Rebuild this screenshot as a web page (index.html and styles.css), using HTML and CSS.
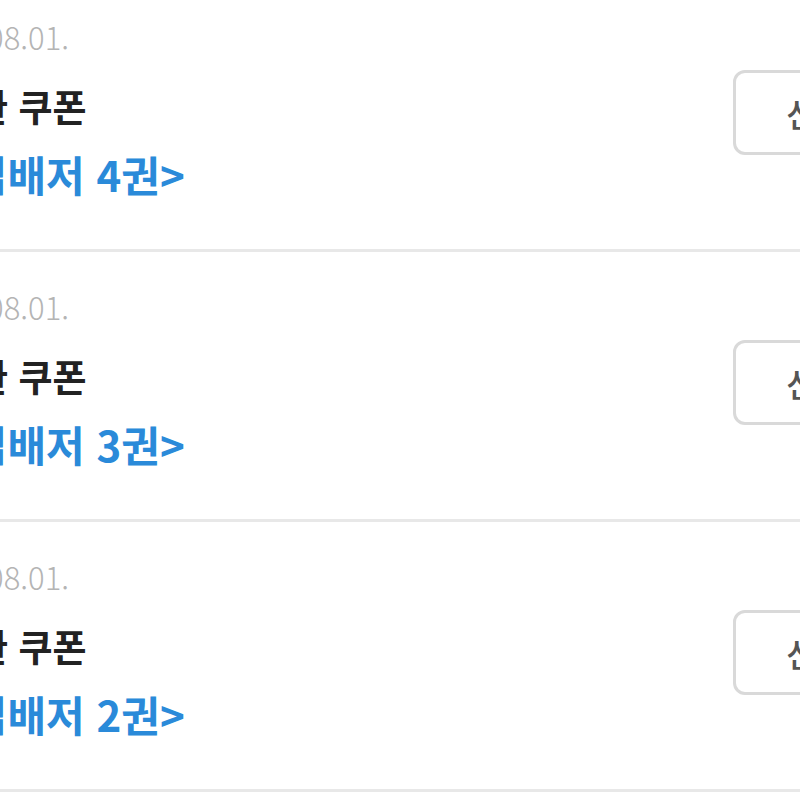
FILE: index.html
```html
<!DOCTYPE html>
<html lang="ko">
<head>
<meta charset="utf-8">
<title>쿠폰</title>
<link rel="stylesheet" href="styles.css">
</head>
<body>
<ul class="coupon-list">
  <li class="coupon">
    <div class="coupon-info">
      <p class="coupon-date">2024.08.01.</p>
      <p class="coupon-title">상품교환 쿠폰</p>
      <p class="coupon-link">&lt;입배저 4권&gt;</p>
    </div>
    <button class="coupon-btn" type="button">신청</button>
  </li>
  <li class="coupon">
    <div class="coupon-info">
      <p class="coupon-date">2024.08.01.</p>
      <p class="coupon-title">상품교환 쿠폰</p>
      <p class="coupon-link">&lt;입배저 3권&gt;</p>
    </div>
    <button class="coupon-btn" type="button">신청</button>
  </li>
  <li class="coupon">
    <div class="coupon-info">
      <p class="coupon-date">2024.08.01.</p>
      <p class="coupon-title">상품교환 쿠폰</p>
      <p class="coupon-link">&lt;입배저 2권&gt;</p>
    </div>
    <button class="coupon-btn" type="button">신청</button>
  </li>
</ul>
</body>
</html>
```
FILE: styles.css
```css
html, body {
  margin: 0;
  padding: 0;
  background: #ffffff;
  overflow: hidden;
  width: 800px;
  height: 800px;
}

body {
  font-family: "Noto Sans CJK KR", "Noto Sans", sans-serif;
}

.coupon-list {
  list-style: none;
  margin: -18px 0 0 0;
  padding: 0;
}

.coupon {
  display: flex;
  align-items: flex-start;
  justify-content: space-between;
  box-sizing: border-box;
  height: 270px;
  padding-top: 37px;
  border-bottom: 3px solid #e8e8e8;
}

.coupon-info {
  display: flex;
  flex-direction: column;
  white-space: nowrap;
  min-width: 0;
}

.coupon-info p {
  margin: 0;
}

.coupon-date {
  font-size: 31px;
  line-height: 36px;
  font-weight: 300;
  color: #b4b4b4;
  margin-left: -87px !important;
}

.coupon-title {
  font-size: 37px;
  line-height: 42px;
  font-weight: 700;
  color: #222222;
  margin-top: 30px !important;
  margin-left: -128px !important;
}

.coupon-link {
  font-size: 42px;
  line-height: 48px;
  font-weight: 700;
  color: #2a8ad9;
  margin-top: 23px !important;
  margin-left: -56px !important;
}

.coupon-btn {
  flex-shrink: 0;
  margin-top: 51px;
  margin-right: -113px;
  width: 180px;
  height: 85px;
  box-sizing: border-box;
  padding: 0 0 0 50px;
  text-align: left;
  border: 3px solid #d9d9d9;
  border-radius: 12px;
  background: #ffffff;
  font-family: "Noto Sans CJK KR", sans-serif;
  font-size: 33px;
  font-weight: 500;
  color: #555555;
  white-space: nowrap;
}
```
